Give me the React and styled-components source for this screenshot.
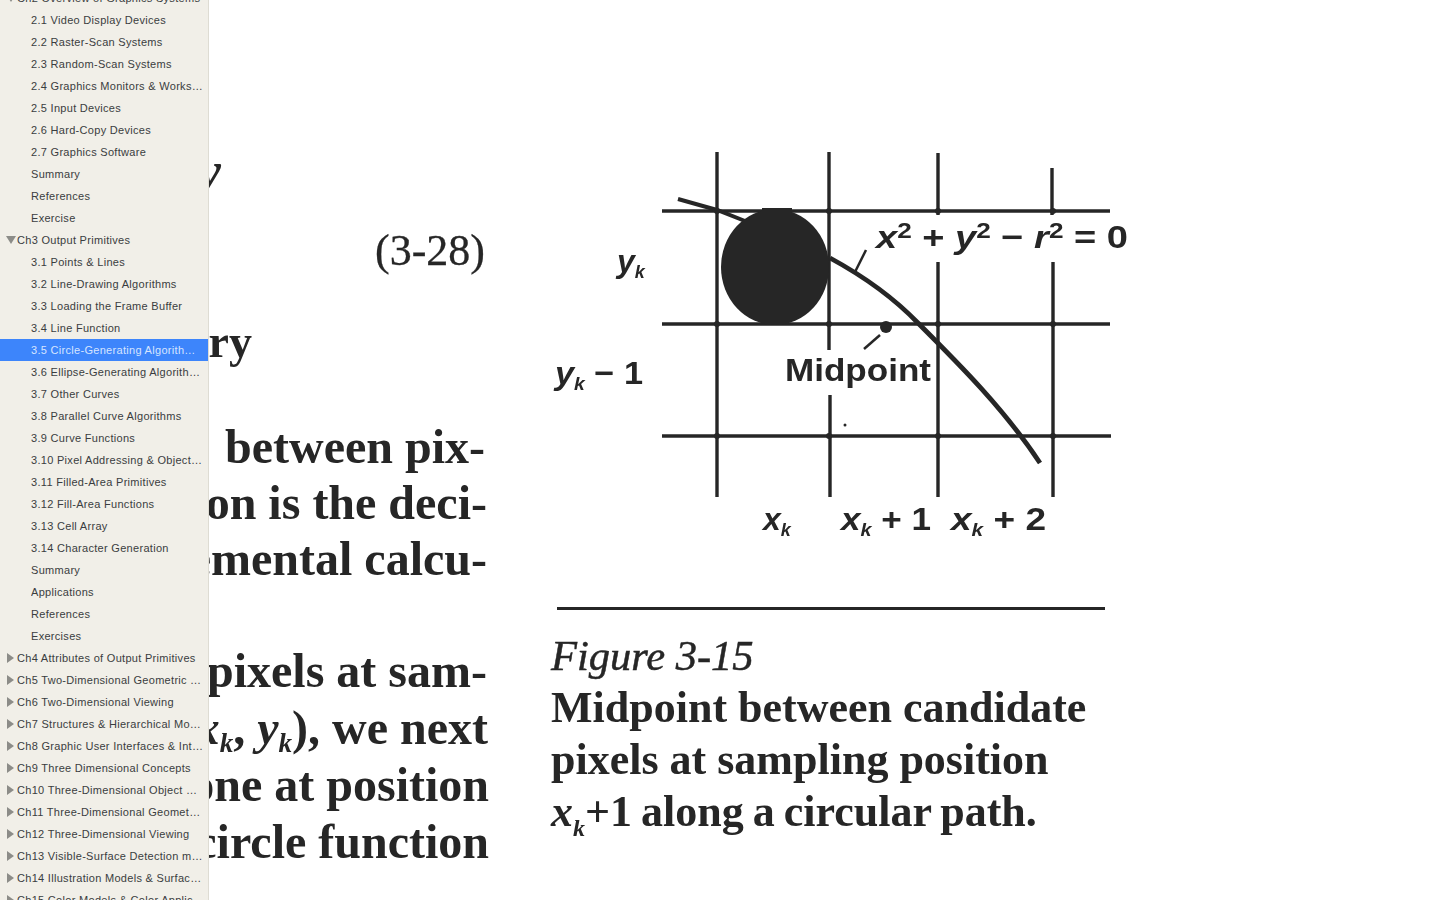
import styled, { createGlobalStyle } from "styled-components";

const Global = createGlobalStyle`
  html, body {
    margin: 0;
    height: 100%;
    overflow: hidden;
    background: #fff;
  }
`;

const outline = [
  { label: "Ch2 Overview of Graphics Systems", open: true },
  { label: "2.1 Video Display Devices" },
  { label: "2.2 Raster-Scan Systems" },
  { label: "2.3 Random-Scan Systems" },
  { label: "2.4 Graphics Monitors & Workstations" },
  { label: "2.5 Input Devices" },
  { label: "2.6 Hard-Copy Devices" },
  { label: "2.7 Graphics Software" },
  { label: "Summary" },
  { label: "References" },
  { label: "Exercise" },
  { label: "Ch3 Output Primitives", open: true },
  { label: "3.1 Points & Lines" },
  { label: "3.2 Line-Drawing Algorithms" },
  { label: "3.3 Loading the Frame Buffer" },
  { label: "3.4 Line Function" },
  { label: "3.5 Circle-Generating Algorithms", active: true },
  { label: "3.6 Ellipse-Generating Algorithms" },
  { label: "3.7 Other Curves" },
  { label: "3.8 Parallel Curve Algorithms" },
  { label: "3.9 Curve Functions" },
  { label: "3.10 Pixel Addressing & Object Geometry" },
  { label: "3.11 Filled-Area Primitives" },
  { label: "3.12 Fill-Area Functions" },
  { label: "3.13 Cell Array" },
  { label: "3.14 Character Generation" },
  { label: "Summary" },
  { label: "Applications" },
  { label: "References" },
  { label: "Exercises" },
  { label: "Ch4 Attributes of Output Primitives", open: false },
  { label: "Ch5 Two-Dimensional Geometric Transformations", open: false },
  { label: "Ch6 Two-Dimensional Viewing", open: false },
  { label: "Ch7 Structures & Hierarchical Modeling", open: false },
  { label: "Ch8 Graphic User Interfaces & Interactive Input", open: false },
  { label: "Ch9 Three Dimensional Concepts", open: false },
  { label: "Ch10 Three-Dimensional Object Representations", open: false },
  { label: "Ch11 Three-Dimensional Geometric Transformations", open: false },
  { label: "Ch12 Three-Dimensional Viewing", open: false },
  { label: "Ch13 Visible-Surface Detection methods", open: false },
  { label: "Ch14 Illustration Models & Surface Rendering", open: false },
  { label: "Ch15 Color Models & Color Applications", open: false },
];

const gridDots = [177, 289, 398, 513].flatMap((x) => [71, 184, 296].map((y) => [x, y]));

function Row({ item }) {
  const chapter = item.open !== undefined;
  return (
    <OutlineRow $active={item.active} $chapter={chapter}>
      {chapter && <Arrow $open={item.open} />}
      <RowLabel>{item.label}</RowLabel>
    </OutlineRow>
  );
}

function Figure() {
  return (
    <FigureSvg viewBox="0 0 610 420" width="610" height="420">
      <g stroke="#262626" strokeWidth="3.4" fill="none">
        <path d="M177 12V357" />
        <path d="M289 12V210M290 255V357" />
        <path d="M398 13V75M398 122V357" />
        <path d="M512 28V75M513 122V357" />
        <path d="M122 71H570" />
        <path d="M122 184H570" />
        <path d="M122 296H571" />
        <path d="M138 59L177 70L205 81" strokeWidth="4" />
        <path d="M290 118C325 137 352 156 378 183C420 225 465 270 500 323" strokeWidth="4.8" />
        <path d="M315 132L326 110" strokeWidth="2.5" />
        <path d="M324 209L340 195" strokeWidth="2.5" />
      </g>
      <ellipse cx="235" cy="127" rx="54" ry="58" fill="#262626" />
      <rect x="222" y="68" width="30" height="8" fill="#262626" />
      <circle cx="346" cy="187" r="6" fill="#262626" />
      <circle cx="305" cy="285" r="1.5" fill="#262626" />
      {gridDots.map(([x, y]) => (
        <circle key={`${x}-${y}`} cx={x} cy={y} r="3" fill="#262626" />
      ))}
      <FigureText x="336" y="108" textLength="252" lengthAdjust="spacingAndGlyphs">
        <tspan fontStyle="italic">x</tspan><tspan fontSize="22" dy="-10">2</tspan>
        <tspan dy="10"> + </tspan><tspan fontStyle="italic">y</tspan><tspan fontSize="22" dy="-10">2</tspan>
        <tspan dy="10"> − </tspan><tspan fontStyle="italic">r</tspan><tspan fontSize="22" dy="-10">2</tspan>
        <tspan dy="10"> = 0</tspan>
      </FigureText>
      <FigureText x="77" y="132" fontStyle="italic">y<tspan fontSize="18" dy="6">k</tspan></FigureText>
      <FigureText x="15" y="244" textLength="88" lengthAdjust="spacingAndGlyphs"><tspan fontStyle="italic">y</tspan><tspan fontSize="18" fontStyle="italic" dy="6">k</tspan><tspan dy="-6"> − 1</tspan></FigureText>
      <FigureText x="245" y="241" textLength="146" lengthAdjust="spacingAndGlyphs">Midpoint</FigureText>
      <FigureText x="223" y="390" fontStyle="italic">x<tspan fontSize="18" dy="6">k</tspan></FigureText>
      <FigureText x="301" y="390" textLength="90" lengthAdjust="spacingAndGlyphs"><tspan fontStyle="italic">x</tspan><tspan fontSize="18" fontStyle="italic" dy="6">k</tspan><tspan dy="-6"> + 1</tspan></FigureText>
      <FigureText x="411" y="390" textLength="95" lengthAdjust="spacingAndGlyphs"><tspan fontStyle="italic">x</tspan><tspan fontSize="18" fontStyle="italic" dy="6">k</tspan><tspan dy="-6"> + 2</tspan></FigureText>
    </FigureSvg>
  );
}

export default function App() {
  return (
    <>
      <Global />
      <Window>
        <Sidebar>
          {outline.map((item, index) => (
            <Row item={item} key={index} />
          ))}
        </Sidebar>
        <Page>
          <TextColumn>
            <Fragment>y</Fragment>
            <Equation>(3-28)</Equation>
            <Heading>Summary</Heading>
            <Paragraph $lead={56} $gap={52}>
              <Line $inset={5}><span>the midpoint{"\u200A"} between pix-</span></Line>
              <Line $inset={3}><span>Our decision is the deci-</span></Line>
              <Line $inset={3}><span>for incremental calcu-</span></Line>
            </Paragraph>
            <Paragraph $lead={57} $gap={55}>
              <Line $inset={3}><span>the two pixels at sam-</span></Line>
              <Line $inset={2}><span>at (<i>x</i><SmallSub>k</SmallSub>, <i>y</i><SmallSub>k</SmallSub>), we next</span></Line>
              <Line $inset={1}><span>the one at position</span></Line>
              <Line $inset={1}><span>the circle function</span></Line>
            </Paragraph>
          </TextColumn>
          <FigureColumn>
            <Figure />
            <Rule />
            <Caption>
              <CaptionTitle>Figure 3-15</CaptionTitle>
              <div>Midpoint between candidate</div>
              <div>pixels at sampling position</div>
              <CaptionLast><i>x</i><CapSub>k</CapSub>+1 along a circular path.</CaptionLast>
            </Caption>
          </FigureColumn>
        </Page>
      </Window>
    </>
  );
}

const Window = styled.div`
  display: flex;
  width: 1440px;
  height: 900px;
  overflow: hidden;
  background: #fff;
`;

const Sidebar = styled.nav`
  flex: 0 0 208px;
  height: 900px;
  overflow: hidden;
  background: #f1efe8;
  border-right: 1px solid #dedcd3;
  font-family: "Liberation Sans", Arial, sans-serif;
  font-size: 11px;
`;

const OutlineRow = styled.div`
  display: flex;
  align-items: center;
  height: 22px;
  padding-left: ${(p) => (p.$chapter ? "6px" : "31px")};
  padding-right: ${(p) => (p.$active ? "10px" : "4px")};
  color: ${(p) => (p.$active ? "#d6e4ff" : "#3a3d40")};
  background: ${(p) => (p.$active ? "#3d85fb" : "transparent")};
  &:first-child {
    margin-top: -13px;
  }
`;

const RowLabel = styled.span`
  flex: 1;
  min-width: 0;
  overflow: hidden;
  white-space: nowrap;
  text-overflow: ellipsis;
  letter-spacing: 0.3px;
`;

const Arrow = styled.span`
  flex: 0 0 11px;
  width: 0;
  height: 0;
  box-sizing: border-box;
  ${(p) =>
    p.$open
      ? `
    border-left: 5px solid transparent;
    border-right: 5px solid transparent;
    border-top: 8px solid #8c8c88;
    flex-basis: 10px;
    margin-right: 1px;
  `
      : `
    border-top: 5px solid transparent;
    border-bottom: 5px solid transparent;
    border-left: 7px solid #8c8c88;
    margin-left: 1px;
    flex-basis: 7px;
    margin-right: 3px;
  `}
`;

const Page = styled.main`
  flex: 1;
  display: flex;
  min-width: 0;
  font-family: "Liberation Serif", "Times New Roman", serif;
  color: #262626;
  filter: blur(0.35px);
`;

const TextColumn = styled.section`
  flex: 0 0 281px;
  overflow: hidden;
  display: flex;
  flex-direction: column;
  font-size: 48px;
  font-weight: 700;
`;

const Fragment = styled.div`
  margin-top: 146px;
  margin-left: -12px;
  height: 50px;
  line-height: 50px;
  font-size: 54px;
  font-style: italic;
`;

const Equation = styled.div`
  margin-top: 30px;
  height: 50px;
  line-height: 50px;
  padding-right: 5px;
  text-align: right;
  font-size: 44px;
  font-weight: 400;
  -webkit-text-stroke: 0.3px #262626;
`;

const Heading = styled.div`
  margin-top: 41px;
  height: 50px;
  line-height: 50px;
  width: 43px;
  display: flex;
  justify-content: flex-end;
  white-space: nowrap;
  font-size: 46px;
`;

const Paragraph = styled.div`
  margin-top: ${(p) => p.$gap}px;
  line-height: ${(p) => p.$lead}px;
`;

const Line = styled.div`
  display: flex;
  justify-content: flex-end;
  white-space: pre;
  padding-right: ${(p) => p.$inset}px;
  span {
    flex: 0 0 auto;
  }
`;

const SmallSub = styled.sub`
  font-size: 27px;
  font-style: italic;
  line-height: 0;
  vertical-align: -8px;
`;

const FigureColumn = styled.section`
  flex: 0 0 auto;
  margin-left: 50px;
  padding-top: 140px;
  display: flex;
  flex-direction: column;
`;

const FigureSvg = styled.svg`
  display: block;
`;

const FigureText = styled.text`
  font-family: "Liberation Sans", Arial, sans-serif;
  font-weight: 700;
  font-size: 32px;
  fill: #262626;
`;

const Rule = styled.div`
  margin: 47px 0 0 17px;
  width: 548px;
  height: 3px;
  background: #262626;
`;

const Caption = styled.div`
  margin: 20px 0 0 11px;
  font-size: 44px;
  line-height: 52px;
  font-weight: 700;
  white-space: nowrap;
`;

const CaptionTitle = styled.div`
  font-style: italic;
  font-weight: 400;
  font-size: 42.5px;
  -webkit-text-stroke: 0.5px #262626;
`;

const CaptionLast = styled.div`
  word-spacing: -2px;
`;

const CapSub = styled.sub`
  font-size: 24px;
  font-style: italic;
  line-height: 0;
`;
